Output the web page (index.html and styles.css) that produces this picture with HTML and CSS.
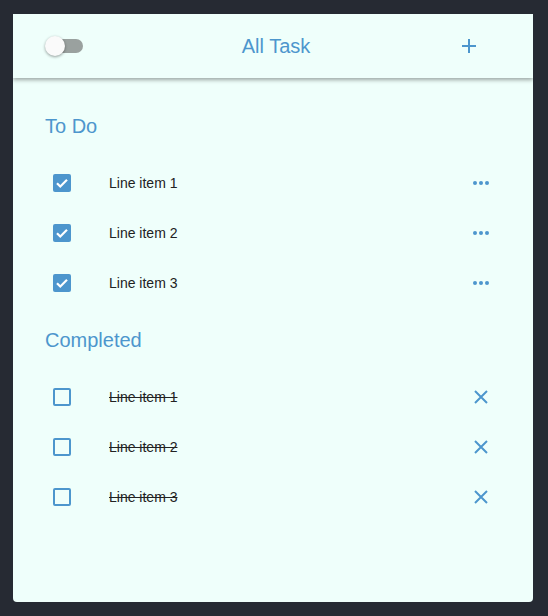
FILE: index.html
```html
<!DOCTYPE html>
<html>
<head>
<meta charset="utf-8">
<link rel="stylesheet" href="styles.css">
</head>
<body>
<div class="card">
  <header class="topbar">
    <div class="toggle"><span class="track"></span><span class="thumb"></span></div>
    <div class="title">All Task</div>
    <svg class="plus" width="14" height="14" viewBox="0 0 14 14"><path d="M7 0V14M0 7H14" stroke="#4d96cd" stroke-width="2"/></svg>
  </header>
  <main class="content">
    <section class="section">
      <h2 class="section-title">To Do</h2>
      <ul class="list">
        <li class="row">
          <span class="check checked"><svg width="18" height="18" viewBox="0 0 18 18"><path d="M4 9.2l3.3 3.3L14 5.8" fill="none" stroke="#fff" stroke-width="2.2"/></svg></span>
          <span class="label">Line item 1</span>
          <svg class="dots" width="16" height="4" viewBox="0 0 16 4"><circle cx="2" cy="2" r="2"/><circle cx="8" cy="2" r="2"/><circle cx="14" cy="2" r="2"/></svg>
        </li>
        <li class="row">
          <span class="check checked"><svg width="18" height="18" viewBox="0 0 18 18"><path d="M4 9.2l3.3 3.3L14 5.8" fill="none" stroke="#fff" stroke-width="2.2"/></svg></span>
          <span class="label">Line item 2</span>
          <svg class="dots" width="16" height="4" viewBox="0 0 16 4"><circle cx="2" cy="2" r="2"/><circle cx="8" cy="2" r="2"/><circle cx="14" cy="2" r="2"/></svg>
        </li>
        <li class="row">
          <span class="check checked"><svg width="18" height="18" viewBox="0 0 18 18"><path d="M4 9.2l3.3 3.3L14 5.8" fill="none" stroke="#fff" stroke-width="2.2"/></svg></span>
          <span class="label">Line item 3</span>
          <svg class="dots" width="16" height="4" viewBox="0 0 16 4"><circle cx="2" cy="2" r="2"/><circle cx="8" cy="2" r="2"/><circle cx="14" cy="2" r="2"/></svg>
        </li>
      </ul>
    </section>
    <section class="section">
      <h2 class="section-title">Completed</h2>
      <ul class="list">
        <li class="row">
          <span class="check"></span>
          <span class="label done">Line item 1</span>
          <svg class="close" width="14" height="14" viewBox="0 0 14 14"><path d="M1 1L13 13M13 1L1 13" stroke="#4d96cd" stroke-width="2"/></svg>
        </li>
        <li class="row">
          <span class="check"></span>
          <span class="label done">Line item 2</span>
          <svg class="close" width="14" height="14" viewBox="0 0 14 14"><path d="M1 1L13 13M13 1L1 13" stroke="#4d96cd" stroke-width="2"/></svg>
        </li>
        <li class="row">
          <span class="check"></span>
          <span class="label done">Line item 3</span>
          <svg class="close" width="14" height="14" viewBox="0 0 14 14"><path d="M1 1L13 13M13 1L1 13" stroke="#4d96cd" stroke-width="2"/></svg>
        </li>
      </ul>
    </section>
  </main>
</div>
</body>
</html>
```

FILE: styles.css
```css
* { box-sizing: border-box; }
html, body { margin: 0; padding: 0; }
body {
  background: #262a33;
  width: 548px;
  height: 616px;
  padding: 14px 15px 14px 13px;
  font-family: "Liberation Sans", Arial, sans-serif;
  overflow: hidden;
}
.card {
  background: #efffFb;
  width: 520px;
  height: 588px;
  border-radius: 0 0 4px 4px;
  overflow: hidden;
}
.topbar {
  position: relative;
  height: 64px;
  display: flex;
  align-items: center;
  padding: 0 57px 0 32px;
  box-shadow: 0 2px 4px rgba(0,0,0,0.35);
}
.toggle {
  position: relative;
  width: 38px;
  height: 20px;
  display: flex;
  align-items: center;
  justify-content: flex-end;
}
.track {
  width: 34px;
  height: 14px;
  border-radius: 7px;
  background: #9aa19f;
}
.thumb {
  position: absolute;
  left: 0;
  top: 0;
  width: 20px;
  height: 20px;
  border-radius: 50%;
  background: #fafafa;
  box-shadow: 0 1px 3px rgba(0,0,0,0.4);
}
.title {
  flex: 1;
  text-align: center;
  padding-left: 7px;
  font-size: 20px;
  line-height: 24px;
  color: #4d96cd;
}
.plus { display: block; }
.content {
  padding: 36px 40px 0 32px;
  display: flex;
  flex-direction: column;
  gap: 20px;
}
.section-title {
  margin: 0 0 20px;
  font-weight: normal;
  font-size: 20px;
  line-height: 24px;
  color: #4d96cd;
}
.list {
  list-style: none;
  margin: 0;
  padding: 0;
}
.row {
  height: 50px;
  display: flex;
  align-items: center;
  padding-left: 8px;
}
.check {
  width: 18px;
  height: 18px;
  border: 2px solid #4d96cd;
  border-radius: 2px;
  flex: none;
  display: flex;
  align-items: center;
  justify-content: center;
}
.check.checked {
  background: #4d96cd;
  border: none;
}
.label {
  margin-left: 38px;
  flex: 1;
  font-size: 14px;
  color: #222;
}
.label.done { text-decoration: line-through; }
.dots { fill: #4d96cd; margin-right: 4px; }
.close { margin-right: 5px; }
```
